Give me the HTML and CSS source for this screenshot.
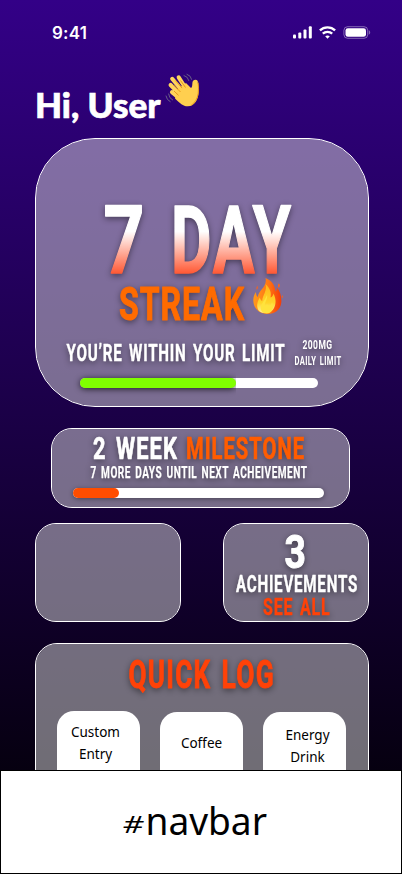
FILE: index.html
```
<!DOCTYPE html>
<html lang="en">
<head>
<meta charset="utf-8">
<meta name="viewport" content="width=device-width, initial-scale=1">
<title>Streak</title>
<link rel="stylesheet" href="styles.css">
</head>
<body>
<div class="screen">
  <header class="status">
    <span class="time">9:41</span>
    <svg class="status-icons" width="80" height="16" viewBox="0 0 80 16">
      <g fill="#fff">
        <rect x="1" y="9.5" width="3" height="4" rx="1"/><rect x="6.3" y="7.5" width="3" height="6" rx="1"/><rect x="11.5" y="4.5" width="3" height="9" rx="1"/><rect x="16.8" y="1.3" width="3" height="12.2" rx="1"/>
        <rect x="53.5" y="3.2" width="20.5" height="8.6" rx="2.4"/>
        <path d="M76.8 5.3v4.4c.9-.4 1.4-1.2 1.4-2.2s-.5-1.800-1.400-2.200z" opacity=".4"/>
        <path d="M35.500 13.700l-2.300-2.400c1.300-1.100 3.300-1.100 4.600 0z"/>
      </g>
      <rect x="51.900" y="1.700" width="23.800" height="11.600" rx="3.700" fill="none" stroke="#fff" opacity=".4"/>
      <g fill="none" stroke="#fff" stroke-width="2.300"><path d="M27.900 5.400c4.200-4.100 11-4.100 15.200 0"/><path d="M30.800 8.700c2.600-2.500 6.800-2.500 9.400 0"/></g>
    </svg>
  </header>

  <div class="greeting">
    <svg class="line" width="334" height="66">
      <text class="hello" x="0" y="46" textLength="125.500" lengthAdjust="spacingAndGlyphs">Hi, User</text>
      <g transform="translate(130 1.500)">
        <g fill="none" stroke="#77758a" stroke-width=".8" stroke-linecap="round"><path d="M19 2q4 1 4.800 5M22 .8q4 1.200 4.600 5M3.600 20.500q.4 4.300 4 6M1 22.500q.6 4 4.200 5.700"/></g>
        <g fill="none" stroke="#ffd45c" stroke-width="4.100" stroke-linecap="round"><path d="M17 17L7.200 5.300M20.500 14.500L13.700 3.800M15 21L5.600 11.500M14 24.500L7 18.600"/></g>
        <path fill="#ffcf4f" d="M12 16l9-6.500 5 5c1.300-1 1.200-2.500 1.400-5.300.2-2.600 3.300-4 5.400-1.800-.2 3 1.200 6 .8 11.500C33.300 25 30 33 22.500 32.800c-4.500 0-7.500-3-12.500-7.800z"/>
        <path fill="none" stroke="#e8991c" stroke-width="1" d="M8.500 11.500l7 7M10.300 7l6.800 7.600M15.500 7l5 7M9 17.500l4.500 4.300M33.200 9q.6 7 0 11-1.300 8-7 11.800"/>
      </g>
    </svg>
  </div>

  <main class="content">
    <section class="card streak-card">
      <svg class="line" width="332" height="137">
        <defs><linearGradient id="heat" gradientUnits="userSpaceOnUse" x1="0" y1="67" x2="0" y2="134"><stop offset=".38" stop-color="#fff"/><stop offset="1" stop-color="#ff5a36"/></linearGradient></defs>
        <g class="display s94" fill="url(#heat)" stroke="url(#heat)"><text x="67.500" y="134" textLength="43" lengthAdjust="spacingAndGlyphs">7</text><text x="135" y="134" textLength="122" lengthAdjust="spacingAndGlyphs">DAY</text></g>
      </svg>
      <svg class="line" width="332" height="52">
        <defs>
          <linearGradient id="flame" x1="0" x2="1"><stop offset="0" stop-color="#ff9a1c"/><stop offset=".55" stop-color="#ff7414"/><stop offset="1" stop-color="#f23c08"/></linearGradient>
          <linearGradient id="core" x1="0" y1="0" x2="0" y2="1"><stop offset="0" stop-color="#ffb419"/><stop offset=".65" stop-color="#ffd52a"/><stop offset="1" stop-color="#fff09a"/></linearGradient>
        </defs>
        <text class="display s47 orange" x="83" y="44" textLength="126" lengthAdjust="spacingAndGlyphs">STREAK</text>
        <g transform="translate(217 2)">
          <path fill="url(#flame)" d="M12.500 0c7 2.800 9.500 8 10.200 13.500.9-1 1.300-2.500 1-4.500 4 5 5 10.500 4.600 15.500C27.700 31.500 22 36 14.500 36 6 36 .5 30.500.3 22.500.2 19 1.500 16 3 14c0 2.500.5 4 1.800 5C5.500 12 14.500 9 12.500 0z"/>
          <path fill="url(#core)" d="M12.500 6c5 5 6 9 5 13.500 1.800-.5 2.500-2 2.900-4 3.300 6 2.600 12-.3 16-3.100 4-10.500 5-14.500 1C3 28 4.500 23 6.800 19.500c.5 2 1.200 3 2.400 3.500C9.500 17 14.500 13 12.500 6z"/>
          <path fill="#ffe33d" d="M14 17c1 4-2.500 7-2 10.500 1 0 1.500-.4 2-1.500 2 3 4.600 1 5-2 2.600 5 .5 11.500-5.500 11.500-4.500 0-6-3-5.500-6.500C8.500 25 12 22 14 17z"/>
          <path fill="#f9641a" d="M4.500 7.500q1 2.200-.7 4.500-1.300-1.800.7-4.500zM25.500 5q2.500 1.500.5 5-2.200-2 0-5zM29.500 17q1 1.500-.3 3.400-1.200-1.400.3-3.400z"/>
        </g>
      </svg>
      <svg class="line white" width="332" height="50">
        <text class="display s23" x="30.500" y="33" textLength="219" lengthAdjust="spacingAndGlyphs">YOU’RE WITHIN YOUR LIMIT</text>
        <text class="display s12" x="266.500" y="21" textLength="30" lengthAdjust="spacingAndGlyphs">200MG</text>
        <text class="display s12" x="258.500" y="37" textLength="47" lengthAdjust="spacingAndGlyphs">DAILY LIMIT</text>
      </svg>
      <div class="bar limit-bar"><div class="fill" style="width:156px"></div></div>
    </section>

    <section class="card milestone">
      <svg class="line white" width="297" height="59">
        <g class="display s31"><text x="41" y="30.300" textLength="85" lengthAdjust="spacingAndGlyphs">2 WEEK</text><text class="amber" x="134" y="30.300" textLength="119" lengthAdjust="spacingAndGlyphs">MILESTONE</text></g>
        <text class="display s16" x="38.500" y="49.300" textLength="217" lengthAdjust="spacingAndGlyphs">7 MORE DAYS UNTIL NEXT ACHEIVEMENT</text>
      </svg>
      <div class="bar milestone-bar"><div class="fill" style="width:46px"></div></div>
    </section>

    <div class="pair">
      <section class="card small"></section>
      <section class="card small">
        <svg class="line white" width="144" height="97">
          <text class="display s47" x="60.500" y="44" textLength="22.500" lengthAdjust="spacingAndGlyphs">3</text>
          <text class="display s23" x="12" y="68.300" textLength="122" lengthAdjust="spacingAndGlyphs">ACHIEVEMENTS</text>
          <text class="display s23 red" x="39" y="91.300" textLength="67.500" lengthAdjust="spacingAndGlyphs">SEE ALL</text>
        </svg>
      </section>
    </div>

    <section class="card quick">
      <svg class="line" width="332" height="67">
        <g class="display s40 red"><text x="92.500" y="44" textLength="83" lengthAdjust="spacingAndGlyphs">QUICK</text><text x="185.500" y="44" textLength="53.500" lengthAdjust="spacingAndGlyphs">LOG</text></g>
      </svg>
      <div class="tiles">
        <div class="tile custom">Custom<br>Entry</div>
        <div class="tile coffee">Coffee</div>
        <div class="tile energy">Energy<br>Drink</div>
      </div>
    </section>
  </main>

  <nav class="navbar">
    <svg class="line" width="400" height="102">
      <text class="hash" x="121.500" y="62" textLength="21" lengthAdjust="spacingAndGlyphs">#</text>
      <text class="nav-text" x="144.500" y="64" textLength="121.500" lengthAdjust="spacingAndGlyphs">navbar</text>
    </svg>
  </nav>
</div>
</body>
</html>
```
FILE: styles.css
```
* { box-sizing: border-box; }
body { margin: 0; font-family: "Noto Sans", sans-serif; }
.screen {
  width: 402px; height: 874px; overflow: hidden;
  display: flex; flex-direction: column;
  background: linear-gradient(#330087, #000);
}
.line { display: block; overflow: visible; flex: none; }
.white { fill: #fff; stroke: #fff; }
.orange { fill: #ff6b00; stroke: #ff6b00; }
.amber { fill: #ff5c00; stroke: #ff5c00; }
.red { fill: #ff4208; stroke: #ff4208; }
.status { display: flex; justify-content: space-between; height: 72px; flex: none; padding: 25px 30px 0 52px; }
.time { color: #fff; font: 600 17px/16px Inter, sans-serif; letter-spacing: .2px; }
.status-icons { display: block; }
.greeting { height: 66px; flex: none; padding-left: 35px; }
.hello { font: 900 35px Lato, sans-serif; fill: #fff; stroke: #fff; stroke-width: .7px; }
.content { flex: 1; min-height: 0; overflow: hidden; padding: 0 33px 0 35px; }
.card { border: 1px solid #fff; background: rgba(217, 217, 217, .5); background-clip: padding-box; }
.display {
  font-family: Roboto, sans-serif; font-weight: 700;
  letter-spacing: .05em; word-spacing: .13em;
  stroke-width: .4px; stroke-linejoin: round;
  filter: drop-shadow(0 2px 3px rgba(0, 0, 0, .45));
}
.s94 { font-size: 94px; letter-spacing: .03em; stroke-width: 1.500px; }
.s47 { font-size: 47px; letter-spacing: .03em; stroke-width: 1px; }
.s40 { font-size: 39.500px; stroke-width: .9px; }
.s31 { font-size: 31px; stroke-width: .7px; }
.s23 { font-size: 23px; }
.s16 { font-size: 16px; stroke-width: .25px; }
.s12 { font-size: 12px; stroke-width: 0; }
.streak-card { width: 334px; height: 269px; border-radius: 60px; }
.bar { height: 10px; border-radius: 5px; background: #fff; box-shadow: 0 1px 5px rgba(0, 0, 0, .4); }
.fill { height: 10px; border-radius: 5px; }
.limit-bar { width: 238px; margin-left: 44px; box-shadow: none; }
.limit-bar .fill { background: #80ff00; box-shadow: 0 1px 6px rgba(0, 0, 0, .75); clip-path: inset(-10px 0 -10px -10px round 0 5px 5px 0); }
.milestone { width: 299px; height: 80px; margin: 21px 0 0 16px; border-radius: 21px; }
.milestone-bar { width: 251px; margin-left: 21px; }
.milestone-bar .fill { background: #ff4d00; }
.pair { display: flex; gap: 42px; margin-top: 15px; }
.small { width: 146px; height: 99px; border-radius: 21px; }
.quick { width: 334px; height: 220px; margin-top: 21px; border-radius: 22px; }
.tiles { display: flex; gap: 20px; padding-left: 21px; }
.tile { width: 83px; height: 110px; border-radius: 17px; background: #fff; color: #000; text-align: center; font-size: 13.500px; line-height: 22px; }
.custom { padding: 10px 6px 0 0; }
.coffee { padding-top: 20px; margin-top: 1px; }
.energy { padding: 12px 0 0 6px; margin-top: 1px; }
.navbar { height: 104px; flex: none; background: #fff; border: 1px solid #000; }
.hash { font-size: 23px; font-style: italic; }
.nav-text { font-size: 37.500px; }
```
